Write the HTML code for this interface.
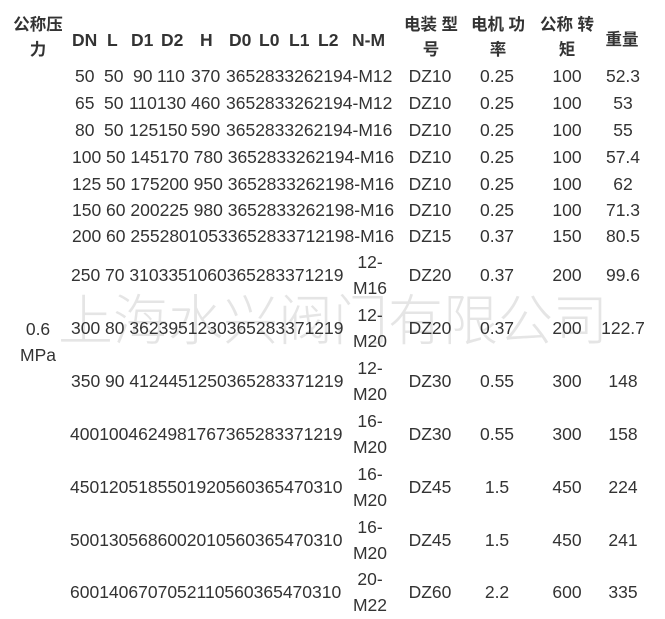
<!DOCTYPE html>
<html><head><meta charset="utf-8"><style>
body{margin:0;width:665px;height:619px;background:#fff;position:relative;overflow:hidden;font-family:"Liberation Sans","Noto Sans CJK SC",sans-serif;font-size:17.5px;color:#333}
.t{position:absolute;line-height:20px;white-space:pre}
.c{position:absolute;line-height:20px;white-space:pre;transform:translateX(-50%)}
.b{font-weight:bold}
.z{font-size:16.5px}
.wm{position:absolute;left:58px;top:284px;font-size:55px;line-height:64px;color:rgba(190,190,190,0.4);white-space:pre;font-family:"Noto Sans CJK SC",sans-serif;font-weight:300}
</style></head><body>
<div class="wm">上海水兴阀门有限公司</div>

<div class="c b z" style="left:38px;top:15px">公称压</div>
<div class="c b z" style="left:38px;top:40px">力</div>
<div class="t b" style="left:72px;top:30px">DN</div>
<div class="t b" style="left:107px;top:30px">L</div>
<div class="t b" style="left:131px;top:30px">D1</div>
<div class="t b" style="left:161px;top:30px">D2</div>
<div class="t b" style="left:200px;top:30px">H</div>
<div class="t b" style="left:229px;top:30px">D0</div>
<div class="t b" style="left:259px;top:30px">L0</div>
<div class="t b" style="left:289px;top:30px">L1</div>
<div class="t b" style="left:318px;top:30px">L2</div>
<div class="t b" style="left:352px;top:30px">N-M</div>
<div class="c b z" style="left:431px;top:15px">电装 型</div>
<div class="c b z" style="left:431px;top:40px">号</div>
<div class="c b z" style="left:498px;top:15px">电机 功</div>
<div class="c b z" style="left:498px;top:40px">率</div>
<div class="c b z" style="left:567px;top:15px">公称 转</div>
<div class="c b z" style="left:567px;top:40px">矩</div>
<div class="c b z" style="left:622px;top:30px">重量</div>

<div class="c" style="left:38px;top:319px">0.6</div>
<div class="c" style="left:38px;top:345px">MPa</div>

<div class="t" style="left:75px;top:66px">50</div><div class="t" style="left:104px;top:66px">50</div><div class="t" style="left:133px;top:66px">90</div><div class="t" style="left:157px;top:66px">110</div><div class="t" style="left:191px;top:66px">370</div><div class="t" style="left:226px;top:66px">3652833262194-M12</div>
<div class="t" style="left:75px;top:93px">65</div><div class="t" style="left:104px;top:93px">50</div><div class="t" style="left:129px;top:93px">110130</div><div class="t" style="left:191px;top:93px">460</div><div class="t" style="left:226px;top:93px">3652833262194-M12</div>
<div class="t" style="left:75px;top:120px">80</div><div class="t" style="left:104px;top:120px">50</div><div class="t" style="left:129px;top:120px">125150</div><div class="t" style="left:191px;top:120px">590</div><div class="t" style="left:226px;top:120px">3652833262194-M16</div>
<div class="t" style="left:72px;top:147px">100 50 145170 780 3652833262194-M16</div>
<div class="t" style="left:72px;top:174px">125 50 175200 950 3652833262198-M16</div>
<div class="t" style="left:72px;top:200px">150 60 200225 980 3652833262198-M16</div>
<div class="t" style="left:72px;top:226px">200 60 25528010533652833712198-M16</div>

<div class="t" style="left:71px;top:265px">250 70 3103351060365283371219</div>
<div class="t" style="left:71px;top:318px">300 80 3623951230365283371219</div>
<div class="t" style="left:71px;top:371px">350 90 4124451250365283371219</div>
<div class="t" style="left:70px;top:424px">4001004624981767365283371219</div>
<div class="t" style="left:70px;top:477px">4501205185501920560365470310</div>
<div class="t" style="left:70px;top:530px">5001305686002010560365470310</div>
<div class="t" style="left:70px;top:582px">6001406707052110560365470310</div>

<div class="c" style="left:370px;top:252px">12-</div><div class="c" style="left:370px;top:278px">M16</div>
<div class="c" style="left:370px;top:305px">12-</div><div class="c" style="left:370px;top:331px">M20</div>
<div class="c" style="left:370px;top:358px">12-</div><div class="c" style="left:370px;top:384px">M20</div>
<div class="c" style="left:370px;top:411px">16-</div><div class="c" style="left:370px;top:437px">M20</div>
<div class="c" style="left:370px;top:464px">16-</div><div class="c" style="left:370px;top:490px">M20</div>
<div class="c" style="left:370px;top:517px">16-</div><div class="c" style="left:370px;top:543px">M20</div>
<div class="c" style="left:370px;top:569px">20-</div><div class="c" style="left:370px;top:595px">M22</div>

<div class="c" style="left:430px;top:66px">DZ10</div><div class="c" style="left:497px;top:66px">0.25</div><div class="c" style="left:567px;top:66px">100</div><div class="c" style="left:623px;top:66px">52.3</div>
<div class="c" style="left:430px;top:93px">DZ10</div><div class="c" style="left:497px;top:93px">0.25</div><div class="c" style="left:567px;top:93px">100</div><div class="c" style="left:623px;top:93px">53</div>
<div class="c" style="left:430px;top:120px">DZ10</div><div class="c" style="left:497px;top:120px">0.25</div><div class="c" style="left:567px;top:120px">100</div><div class="c" style="left:623px;top:120px">55</div>
<div class="c" style="left:430px;top:147px">DZ10</div><div class="c" style="left:497px;top:147px">0.25</div><div class="c" style="left:567px;top:147px">100</div><div class="c" style="left:623px;top:147px">57.4</div>
<div class="c" style="left:430px;top:174px">DZ10</div><div class="c" style="left:497px;top:174px">0.25</div><div class="c" style="left:567px;top:174px">100</div><div class="c" style="left:623px;top:174px">62</div>
<div class="c" style="left:430px;top:200px">DZ10</div><div class="c" style="left:497px;top:200px">0.25</div><div class="c" style="left:567px;top:200px">100</div><div class="c" style="left:623px;top:200px">71.3</div>
<div class="c" style="left:430px;top:226px">DZ15</div><div class="c" style="left:497px;top:226px">0.37</div><div class="c" style="left:567px;top:226px">150</div><div class="c" style="left:623px;top:226px">80.5</div>
<div class="c" style="left:430px;top:265px">DZ20</div><div class="c" style="left:497px;top:265px">0.37</div><div class="c" style="left:567px;top:265px">200</div><div class="c" style="left:623px;top:265px">99.6</div>
<div class="c" style="left:430px;top:318px">DZ20</div><div class="c" style="left:497px;top:318px">0.37</div><div class="c" style="left:567px;top:318px">200</div><div class="c" style="left:623px;top:318px">122.7</div>
<div class="c" style="left:430px;top:371px">DZ30</div><div class="c" style="left:497px;top:371px">0.55</div><div class="c" style="left:567px;top:371px">300</div><div class="c" style="left:623px;top:371px">148</div>
<div class="c" style="left:430px;top:424px">DZ30</div><div class="c" style="left:497px;top:424px">0.55</div><div class="c" style="left:567px;top:424px">300</div><div class="c" style="left:623px;top:424px">158</div>
<div class="c" style="left:430px;top:477px">DZ45</div><div class="c" style="left:497px;top:477px">1.5</div><div class="c" style="left:567px;top:477px">450</div><div class="c" style="left:623px;top:477px">224</div>
<div class="c" style="left:430px;top:530px">DZ45</div><div class="c" style="left:497px;top:530px">1.5</div><div class="c" style="left:567px;top:530px">450</div><div class="c" style="left:623px;top:530px">241</div>
<div class="c" style="left:430px;top:582px">DZ60</div><div class="c" style="left:497px;top:582px">2.2</div><div class="c" style="left:567px;top:582px">600</div><div class="c" style="left:623px;top:582px">335</div>
</body></html>
